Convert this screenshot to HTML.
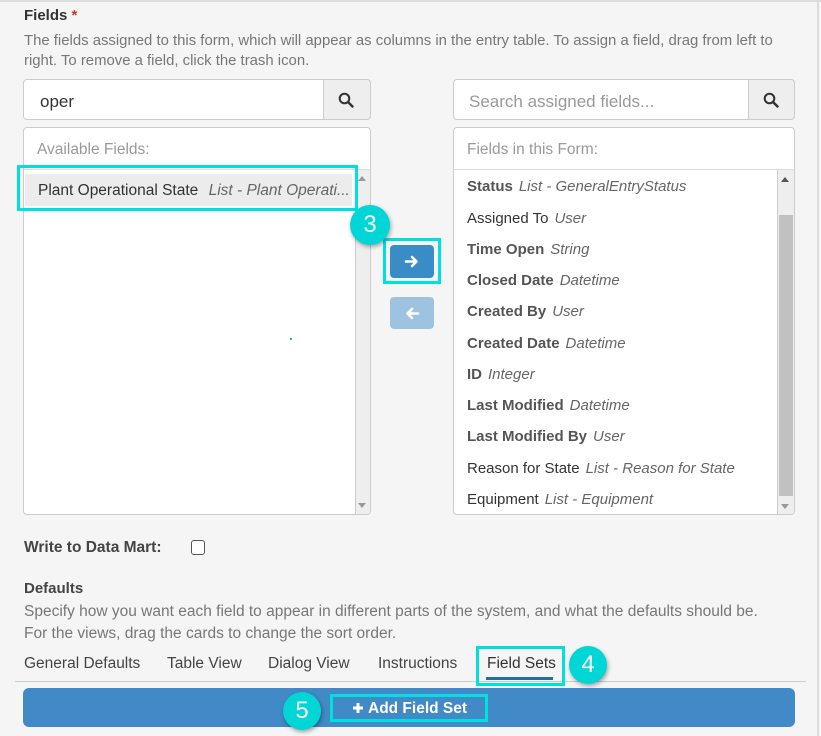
<!DOCTYPE html>
<html><head><meta charset="utf-8"><style>
*{box-sizing:border-box;margin:0;padding:0}
body{width:821px;height:736px;background:#f5f5f5;font-family:"Liberation Sans",sans-serif;font-size:15px;color:#333;position:relative;overflow:hidden}
.a{position:absolute;white-space:nowrap}
.muted{color:#777}
.box{position:absolute;background:#fff;border:1px solid #ccc;border-radius:4px}
.sb{position:absolute;background:#eee;border-left:1px solid #ccc;border-radius:0 4px 4px 0}
.cy{position:absolute;border:3px solid #00e0e0}
.badge{position:absolute;border-radius:50%;background:#00d6d6;color:#fff;font-size:24px;text-align:center;box-shadow:1px 2px 4px rgba(0,0,0,.35)}
.fi{position:absolute;left:467px;white-space:nowrap;font-size:15px}
.fi b{color:#555}
.fi i{color:#666;margin-left:6px}
.tri{position:absolute;width:0;height:0;border-left:4px solid transparent;border-right:4px solid transparent}
</style></head><body>
<div class="a" style="left:0;top:0;width:821px;height:2px;background:#ddd"></div>
<div class="a" style="left:817px;top:0;width:2px;height:736px;background:#ddd"></div>

<div class="a" style="left:24px;top:7px;font-weight:bold;font-size:15px">Fields <span style="color:#c0392b">*</span></div>
<div class="a muted" style="left:24px;top:33px;font-size:14.9px">The fields assigned to this form, which will appear as columns in the entry table. To assign a field, drag from left to</div>
<div class="a muted" style="left:24px;top:53px;font-size:14.9px">right. To remove a field, click the trash icon.</div>

<div class="box" style="left:23px;top:79px;width:348px;height:41px"></div>
<div class="a" style="left:40px;top:92px;font-size:17px">oper</div>
<div class="a" style="left:323px;top:79px;width:48px;height:41px;background:#eee;border:1px solid #ccc;border-radius:0 4px 4px 0"></div>
<svg class="a" style="left:338px;top:92px" width="16" height="16"><circle cx="6.5" cy="6.5" r="4.8" fill="none" stroke="#333" stroke-width="2"/><line x1="10" y1="10" x2="14.5" y2="14.5" stroke="#333" stroke-width="2.4" stroke-linecap="round"/></svg>

<div class="box" style="left:453px;top:79px;width:342px;height:41px"></div>
<div class="a" style="left:469px;top:92px;font-size:17px;color:#999">Search assigned fields...</div>
<div class="a" style="left:748px;top:79px;width:47px;height:41px;background:#eee;border:1px solid #ccc;border-radius:0 4px 4px 0"></div>
<svg class="a" style="left:763px;top:92px" width="16" height="16"><circle cx="6.5" cy="6.5" r="4.8" fill="none" stroke="#333" stroke-width="2"/><line x1="10" y1="10" x2="14.5" y2="14.5" stroke="#333" stroke-width="2.4" stroke-linecap="round"/></svg>

<div class="box" style="left:23px;top:127px;width:348px;height:388px"></div>
<div class="a" style="left:37px;top:141px;color:#999;font-size:15.5px">Available Fields:</div>
<div class="a" style="left:24px;top:169px;width:346px;height:1px;background:#ddd"></div>
<div class="sb" style="left:355px;top:170px;width:15px;height:344px;border-radius:0 0 4px 0"></div>
<div class="tri" style="left:358px;top:176px;border-bottom:5px solid #999"></div>
<div class="tri" style="left:358px;top:503px;border-top:5px solid #999"></div>
<div class="a" style="left:25px;top:174px;width:327px;height:32px;background:#ececec"></div>
<div class="a" style="left:38px;top:182px;font-size:15.5px">Plant Operational State <i style="color:#666;margin-left:6px">List - Plant Operati...</i></div>
<div class="cy" style="left:17px;top:165px;width:341px;height:46px"></div>
<div class="a" style="left:290px;top:338px;width:2px;height:2px;background:#3ab"></div>

<div class="a" style="left:390px;top:245px;width:44px;height:33px;background:#3a8cc6;border-radius:4px"></div>
<svg class="a" style="left:404px;top:254px" width="16" height="15"><path d="M2 7.5H12M8 3l4.5 4.5L8 12" fill="none" stroke="#fff" stroke-width="2.6" stroke-linecap="round" stroke-linejoin="round"/></svg>
<div class="cy" style="left:383px;top:238px;width:58px;height:46px"></div>
<div class="a" style="left:390px;top:297px;width:44px;height:32px;background:#9dc3e0;border-radius:4px"></div>
<svg class="a" style="left:404px;top:306px" width="16" height="15"><path d="M14 7.5H4M8 3L3.5 7.5 8 12" fill="none" stroke="#fff" stroke-width="2.6" stroke-linecap="round" stroke-linejoin="round"/></svg>
<div class="badge" style="left:350px;top:205px;width:40px;height:40px;line-height:40px">3</div>

<div class="box" style="left:453px;top:127px;width:342px;height:388px"></div>
<div class="a" style="left:467px;top:141px;color:#999;font-size:15.5px">Fields in this Form:</div>
<div class="a" style="left:454px;top:169px;width:340px;height:1px;background:#ddd"></div>
<div class="sb" style="left:777px;top:170px;width:17px;height:344px;border-radius:0 0 4px 0"></div>
<div class="a" style="left:779px;top:215px;width:14px;height:281px;background:#c1c1c1"></div>
<div class="tri" style="left:781px;top:177px;border-bottom:5px solid #555"></div>
<div class="tri" style="left:781px;top:504px;border-top:5px solid #999"></div>
<div class="fi" style="top:178px"><b>Status</b><i>List - GeneralEntryStatus</i></div>
<div class="fi" style="top:210px">Assigned To<i>User</i></div>
<div class="fi" style="top:241px"><b>Time Open</b><i>String</i></div>
<div class="fi" style="top:272px"><b>Closed Date</b><i>Datetime</i></div>
<div class="fi" style="top:303px"><b>Created By</b><i>User</i></div>
<div class="fi" style="top:335px"><b>Created Date</b><i>Datetime</i></div>
<div class="fi" style="top:366px"><b>ID</b><i>Integer</i></div>
<div class="fi" style="top:397px"><b>Last Modified</b><i>Datetime</i></div>
<div class="fi" style="top:428px"><b>Last Modified By</b><i>User</i></div>
<div class="fi" style="top:460px">Reason for State<i>List - Reason for State</i></div>
<div class="fi" style="top:491px">Equipment<i>List - Equipment</i></div>

<div class="a" style="left:24px;top:539px;font-weight:bold;color:#444;font-size:15.5px">Write to Data Mart:</div>
<div class="a" style="left:191px;top:540px;width:14px;height:15px;border:1.5px solid #555;border-radius:3px;background:#fff"></div>

<div class="a" style="left:24px;top:580px;font-weight:bold;color:#444">Defaults</div>
<div class="a muted" style="left:24px;top:603px;font-size:15.5px">Specify how you want each field to appear in different parts of the system, and what the defaults should be.</div>
<div class="a muted" style="left:24px;top:625px;font-size:15.5px">For the views, drag the cards to change the sort order.</div>

<div class="a" style="left:24px;top:655px;color:#444;font-size:15.5px">General Defaults</div>
<div class="a" style="left:167px;top:655px;color:#444;font-size:15.5px">Table View</div>
<div class="a" style="left:268px;top:655px;color:#444;font-size:15.5px">Dialog View</div>
<div class="a" style="left:378px;top:655px;color:#444;font-size:15.5px">Instructions</div>
<div class="a" style="left:487px;top:655px;color:#333;font-size:15.5px">Field Sets</div>
<div class="a" style="left:15px;top:681px;width:791px;height:1px;background:#ccc"></div>
<div class="a" style="left:486px;top:677px;width:67px;height:3px;background:#1a6fae"></div>
<div class="cy" style="left:476px;top:646px;width:89px;height:40px"></div>
<div class="badge" style="left:569px;top:646px;width:38px;height:38px;line-height:38px">4</div>

<div class="a" style="left:23px;top:688px;width:772px;height:39px;background:#4289c8;border-radius:6px"></div>
<div class="a" style="left:352px;top:700px;color:#fff;font-weight:bold;font-size:15.5px"><svg width="12" height="12" style="vertical-align:-1px;margin-right:4px"><path d="M6 1V11M1 6H11" stroke="#fff" stroke-width="3"/></svg>Add Field Set</div>
<div class="cy" style="left:330px;top:694px;width:158px;height:28px"></div>
<div class="badge" style="left:283px;top:692px;width:38px;height:38px;line-height:38px">5</div>
</body></html>
